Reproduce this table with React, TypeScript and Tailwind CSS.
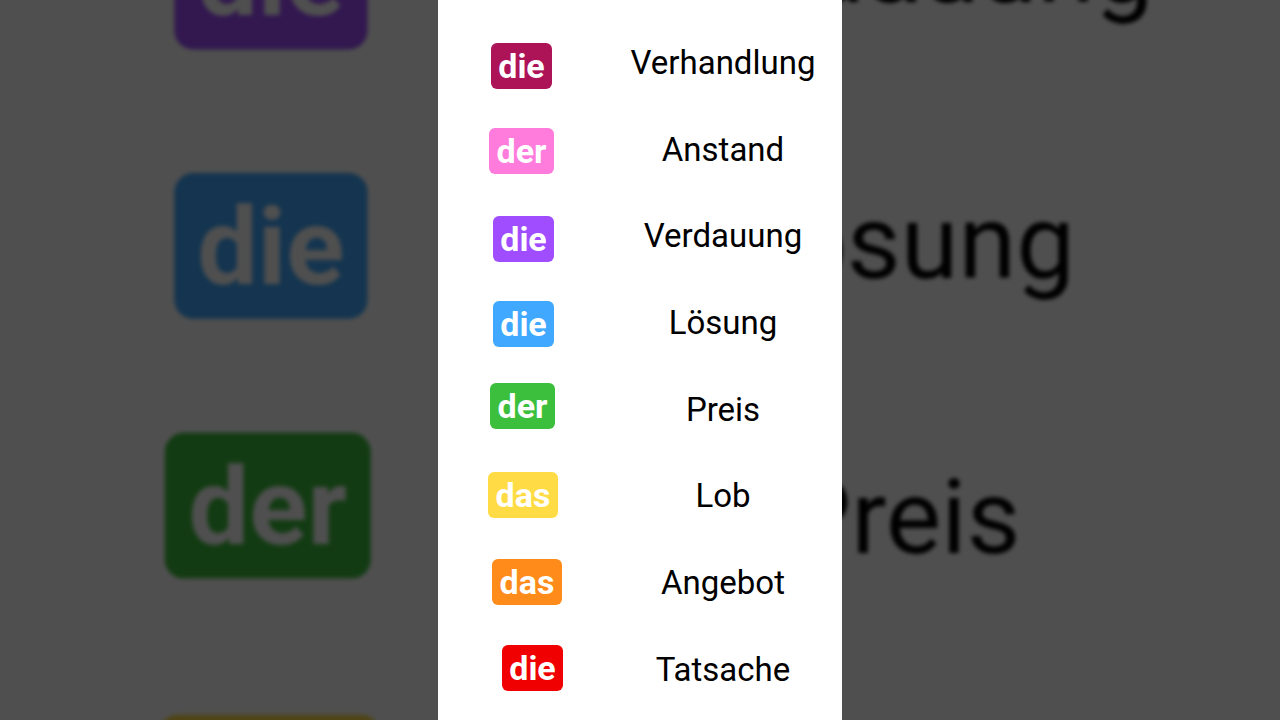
const ROWS = [
  { art: "die", word: "Verhandlung", color: "bg-[#ad1457]", box: "ml-[53px] w-[61px] mt-[8px]" },
  { art: "der", word: "Anstand", color: "bg-[#ff7bdc]", box: "ml-[51px] w-[65px] mt-[4px]" },
  { art: "die", word: "Verdauung", color: "bg-[#a04dff]", box: "ml-[55px] w-[61px] mt-[6px]" },
  { art: "die", word: "Lösung", color: "bg-[#40a9ff]", box: "ml-[55px] w-[61px] mt-[4px]" },
  { art: "der", word: "Preis", color: "bg-[#3cbf3c]", box: "ml-[52px] w-[65px] mb-[6px]" },
  { art: "das", word: "Lob", color: "bg-[#ffdc46]", box: "ml-[50px] w-[70px] mb-[2px]" },
  { art: "das", word: "Angebot", color: "bg-[#ff8c1a]", box: "ml-[54px] w-[70px]" },
  { art: "die", word: "Tatsache", color: "bg-[#f00000]", box: "ml-[64px] w-[61px] mb-[3px]" },
];

function Panel({ className = "" }: { className?: string }) {
  return (
    <div className={`flex h-[720px] w-[404px] shrink-0 flex-col bg-white pt-[19px] ${className}`}>
      {ROWS.map((r) => (
        <div key={r.word} className="flex h-[86.7px] shrink-0 items-center">
          <div className="flex w-[166px] shrink-0 items-center">
            <span
              className={`flex h-[46px] items-center justify-center rounded-[6px] text-[34px] font-bold leading-none text-white ${r.color} ${r.box}`}
            >
              {r.art}
            </span>
          </div>
          <div className="flex-1 text-center text-[33px] leading-none text-black">{r.word}</div>
        </div>
      ))}
    </div>
  );
}

export default function App() {
  return (
    <div
      className="relative flex h-[720px] w-full justify-center overflow-hidden bg-[#4f4f4f]"
      style={{ fontFamily: "Roboto, 'Noto Sans', sans-serif" }}
    >
      {/* blurred backdrop: same frame scaled to fill the width, dimmed */}
      <div aria-hidden className="absolute inset-0 flex items-center justify-center">
        <Panel className="scale-[3.168] brightness-[0.31] blur-[0.6px]" />
      </div>
      <Panel className="relative" />
    </div>
  );
}
